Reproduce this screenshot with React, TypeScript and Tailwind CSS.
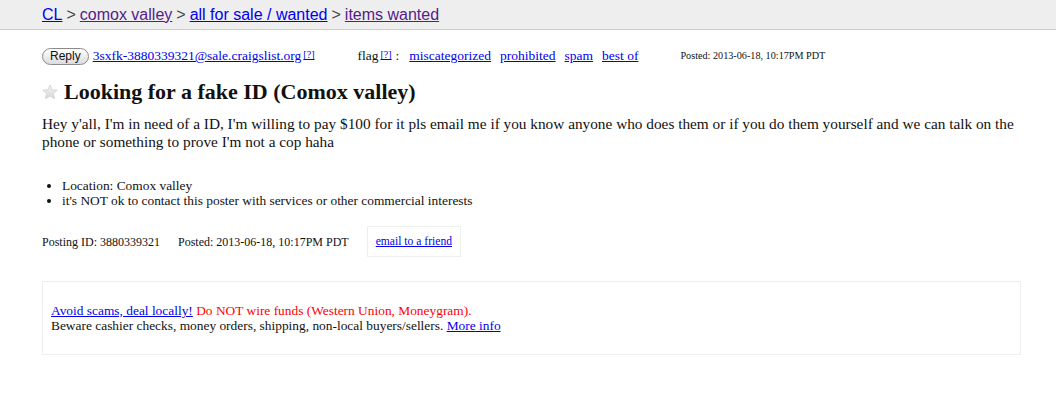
import React from "react";

const serif = { fontFamily: '"Liberation Serif", "Times New Roman", serif' };

function Star() {
  return (
    <svg width="16" height="16" viewBox="0 0 24 24" className="shrink-0">
      <defs>
        <linearGradient id="sg" x1="0" y1="0" x2="0" y2="1">
          <stop offset="0" stopColor="#f4f4f4" />
          <stop offset="1" stopColor="#d8d8d8" />
        </linearGradient>
      </defs>
      <path
        d="M12 1.5l3.2 7.1 7.6.7-5.8 5.1 1.8 7.6L12 18l-6.8 4 1.8-7.6-5.8-5.1 7.6-.7z"
        fill="url(#sg)"
        stroke="#c8c8c8"
        strokeWidth="1"
        strokeLinejoin="round"
      />
    </svg>
  );
}

function Help() {
  return (
    <sup className="ml-[2px] text-[10px] text-[#0000ee] underline relative top-[-1px]">[?]</sup>
  );
}

export default function App() {
  return (
    <div className="w-[1056px] h-[417px] bg-white text-[#222] overflow-hidden" style={serif}>
      <div
        className="h-[30px] bg-[#eeeeee] border-b border-[#cccccc] pl-[42px] flex items-center text-[16px] text-[#444]"
        style={{ fontFamily: '"Liberation Sans", Arial, sans-serif' }}
      >
        <a className="text-[#0000ee] underline">CL</a>
        <span className="mx-[4px]">&gt;</span>
        <a className="text-[#551a8b] underline">comox valley</a>
        <span className="mx-[4px]">&gt;</span>
        <a className="text-[#0000ee] underline">all for sale / wanted</a>
        <span className="mx-[4px]">&gt;</span>
        <a className="text-[#551a8b] underline">items wanted</a>
      </div>

      <div className="pl-[42px] pr-[35px]">
        <div className="flex items-center mt-[17px] h-[18px]">
          <button
            className="h-[17px] px-[7px] rounded-full border border-[#8a8a8a] bg-gradient-to-b from-white to-[#dcdcdc] text-[12px] leading-none text-[#111] flex items-center"
            style={{ fontFamily: '"Liberation Sans", Arial, sans-serif' }}
          >
            Reply
          </button>
          <a className="ml-[4px] text-[13.5px] text-[#0000ee] underline">
            3sxfk-3880339321@sale.craigslist.org
          </a>
          <Help />
          <span className="ml-[43px] text-[13.5px] text-[#111]">flag</span>
          <Help />
          <span className="ml-[4px] text-[13.5px] text-[#111]">:</span>
          <a className="ml-[10px] text-[13.5px] text-[#0000ee] underline">miscategorized</a>
          <a className="ml-[9px] text-[13.5px] text-[#0000ee] underline">prohibited</a>
          <a className="ml-[9px] text-[13.5px] text-[#0000ee] underline">spam</a>
          <a className="ml-[9px] text-[13.5px] text-[#0000ee] underline">best of</a>
          <span className="ml-[42px] text-[10.2px] text-[#111]">Posted: 2013-06-18, 10:17PM PDT</span>
        </div>

        <h2 className="flex items-center gap-[6px] mt-[14px] text-[22px] font-bold leading-[26px] text-[#111]">
          <Star />
          <span>Looking for a fake ID (Comox valley)</span>
        </h2>

        <p className="mt-[10px] text-[15.3px] leading-[18px] text-[#111]">
          Hey y'all, I'm in need of a ID, I'm willing to pay $100 for it pls email me if you know anyone who does them or if you do them yourself and we can talk on the phone or something to prove I'm not a cop haha
        </p>

        <ul className="mt-[27px] text-[13.4px] leading-[15px] list-disc pl-[20px] text-[#111]">
          <li>Location: Comox valley</li>
          <li>it's NOT ok to contact this poster with services or other commercial interests</li>
        </ul>

        <div className="flex items-center mt-[18px] text-[12px] text-[#111]">
          <span>Posting ID: 3880339321</span>
          <span className="ml-[18px]">Posted: 2013-06-18, 10:17PM PDT</span>
          <div className="ml-[18px] border border-[#eeeeee] h-[31px] px-[8px] flex items-center">
            <a className="text-[11.6px] text-[#0000ee] underline">email to a friend</a>
          </div>
        </div>

        <div className="mt-[24px] border border-[#eeeeee] h-[74px] px-[8px] flex flex-col justify-center text-[13.4px] leading-[15px] text-[#111]">
          <div>
            <a className="text-[#0000ee] underline">Avoid scams, deal locally!</a>{" "}
            <span className="text-[#ff0000]">Do NOT wire funds (Western Union, Moneygram).</span>
          </div>
          <div>
            Beware cashier checks, money orders, shipping, non-local buyers/sellers.{" "}
            <a className="text-[#0000ee] underline">More info</a>
          </div>
        </div>
      </div>
    </div>
  );
}
